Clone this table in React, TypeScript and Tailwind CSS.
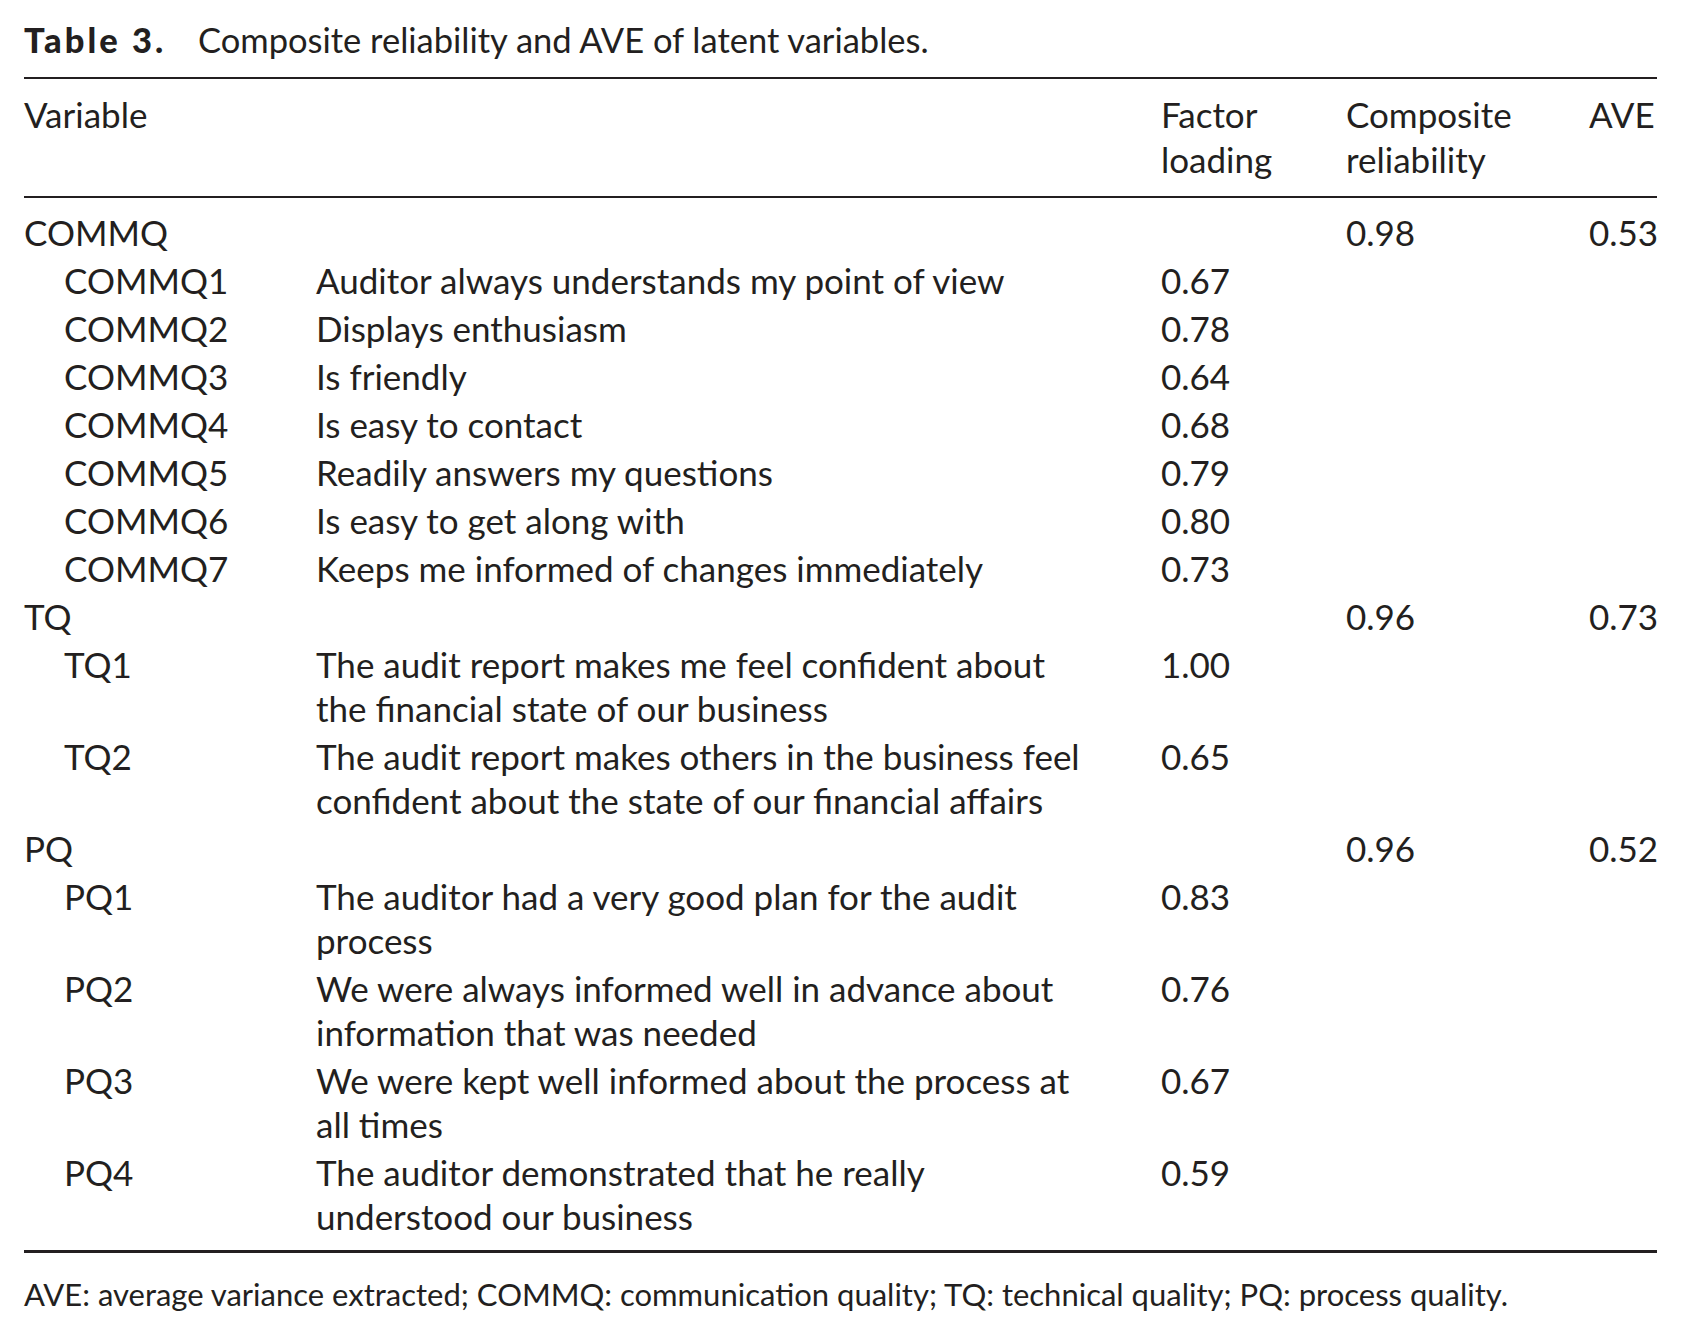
import React from "react";

type Row =
  | { kind: "group"; label: string; cr: string; ave: string }
  | { kind: "item"; label: string; lines: string[]; fl: string };

const rows: Row[] = [
  { kind: "group", label: "COMMQ", cr: "0.98", ave: "0.53" },
  { kind: "item", label: "COMMQ1", lines: ["Auditor always understands my point of view"], fl: "0.67" },
  { kind: "item", label: "COMMQ2", lines: ["Displays enthusiasm"], fl: "0.78" },
  { kind: "item", label: "COMMQ3", lines: ["Is friendly"], fl: "0.64" },
  { kind: "item", label: "COMMQ4", lines: ["Is easy to contact"], fl: "0.68" },
  { kind: "item", label: "COMMQ5", lines: ["Readily answers my questions"], fl: "0.79" },
  { kind: "item", label: "COMMQ6", lines: ["Is easy to get along with"], fl: "0.80" },
  { kind: "item", label: "COMMQ7", lines: ["Keeps me informed of changes immediately"], fl: "0.73" },
  { kind: "group", label: "TQ", cr: "0.96", ave: "0.73" },
  {
    kind: "item",
    label: "TQ1",
    lines: ["The audit report makes me feel confident about", "the financial state of our business"],
    fl: "1.00",
  },
  {
    kind: "item",
    label: "TQ2",
    lines: ["The audit report makes others in the business feel", "confident about the state of our financial affairs"],
    fl: "0.65",
  },
  { kind: "group", label: "PQ", cr: "0.96", ave: "0.52" },
  { kind: "item", label: "PQ1", lines: ["The auditor had a very good plan for the audit", "process"], fl: "0.83" },
  {
    kind: "item",
    label: "PQ2",
    lines: ["We were always informed well in advance about", "information that was needed"],
    fl: "0.76",
  },
  { kind: "item", label: "PQ3", lines: ["We were kept well informed about the process at", "all times"], fl: "0.67" },
  { kind: "item", label: "PQ4", lines: ["The auditor demonstrated that he really", "understood our business"], fl: "0.59" },
];

const grid = "grid grid-cols-[292px_845px_185px_243px_1fr]";

export default function App() {
  return (
    <div
      className="w-[1682px] h-[1338px] bg-white text-[#231f20] pl-[24px]"
      style={{ fontFamily: "Lato, 'Open Sans', sans-serif" }}
    >
      <div className="w-[1633px]">
        <div className="pt-[22px] text-[34.5px] leading-[36px] whitespace-nowrap">
          <span className="inline-block w-[150px] font-black tracking-[3px]">Table 3.</span>
          <span className="ml-[24px]">Composite reliability and AVE of latent variables.</span>
        </div>
        <div className="mt-[19px] h-[2px] bg-[#231f20]" />
        <div className={`${grid} text-[35px] leading-[45px] pt-[13px] pb-[14px]`}>
          <div>Variable</div>
          <div />
          <div>
            Factor
            <br />
            loading
          </div>
          <div>
            Composite
            <br />
            reliability
          </div>
          <div>AVE</div>
        </div>
        <div className="h-[2px] bg-[#231f20]" />
        <div className="pt-[10px] pb-[10px] text-[35px] leading-[44px]">
          {rows.map((r, i) =>
            r.kind === "group" ? (
              <div key={i} className={`${grid} py-[2px]`}>
                <div>{r.label}</div>
                <div />
                <div />
                <div>{r.cr}</div>
                <div>{r.ave}</div>
              </div>
            ) : (
              <div key={i} className={`${grid} py-[2px]`}>
                <div className="pl-[40px]">{r.label}</div>
                <div>
                  {r.lines.map((l, j) => (
                    <div key={j} className="whitespace-nowrap">
                      {l}
                    </div>
                  ))}
                </div>
                <div>{r.fl}</div>
                <div />
                <div />
              </div>
            )
          )}
        </div>
        <div className="h-[3px] bg-[#231f20]" />
        <div className="mt-[24px] text-[31px] leading-[34px] whitespace-nowrap">
          AVE: average variance extracted; COMMQ: communication quality; TQ: technical quality; PQ: process quality.
        </div>
      </div>
    </div>
  );
}
